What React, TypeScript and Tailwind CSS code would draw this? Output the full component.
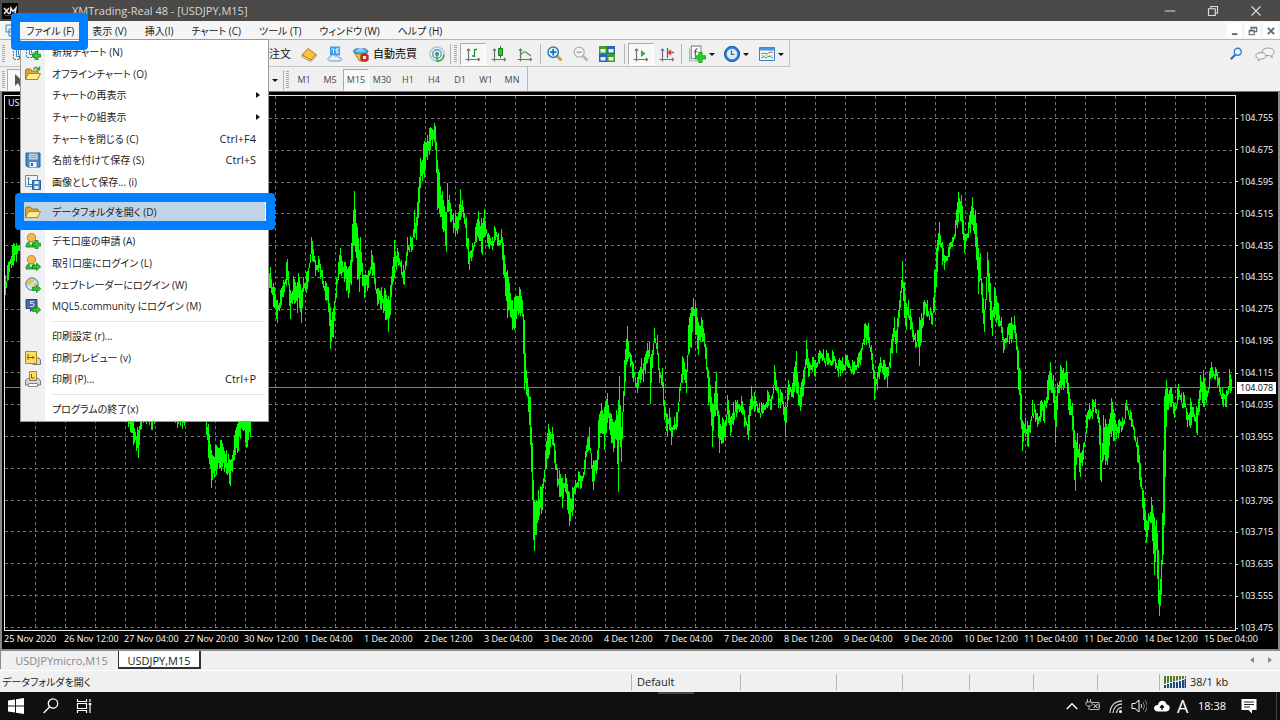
import type { ReactNode } from "react";

type Bar = [number, number, number];

type MenuEntry = {
	label: string;
	shortcut?: string;
	submenu?: boolean;
	selected?: boolean;
	icon?: ReactNode;
};

// x, high, low
const BARS: Bar[] = [
	[5, 275, 295], [8, 262, 280], [12, 245, 265], [16, 243, 262], [20, 232, 250], [60, 300, 330], [120, 380, 410],
	[130, 412, 432], [133, 420, 445], [138, 430, 458], [142, 400, 420], [152, 408, 430], [158, 395, 415], [170, 395, 418],
	[177, 405, 428], [184, 402, 426], [190, 385, 410], [203, 395, 420], [206, 410, 435], [211, 450, 488], [216, 445, 475],
	[220, 440, 468], [226, 450, 474], [230, 460, 486], [234, 435, 460], [238, 415, 451], [242, 395, 430], [246, 405, 448],
	[250, 400, 437], [254, 350, 380], [262, 290, 320],
	[270, 267, 288], [273, 283, 307], [277, 300, 323], [280, 290, 308], [283, 280, 297], [287, 259, 280], [290, 290, 319],
	[293, 276, 300], [297, 282, 313], [298, 273, 298], [301, 290, 323], [303, 277, 292], [306, 272, 293], [308, 268, 282],
	[311, 237, 253], [315, 260, 276], [318, 256, 272], [322, 270, 284], [325, 281, 300], [328, 287, 312], [330, 307, 349],
	[332, 312, 337], [333, 308, 338], [336, 278, 298], [338, 262, 280], [340, 248, 274], [344, 262, 282], [348, 267, 298],
	[351, 243, 285], [352, 224, 262], [354, 191, 245], [357, 227, 280], [359, 250, 292], [360, 237, 275], [364, 275, 298],
	[368, 270, 288], [371, 250, 270], [374, 263, 284], [377, 288, 306], [381, 287, 310], [385, 290, 320], [388, 296, 332],
	[390, 285, 315], [392, 266, 285], [394, 240, 278], [398, 252, 266], [401, 260, 275], [404, 270, 285], [407, 237, 256],
	[412, 237, 250], [414, 210, 238], [416, 217, 240], [418, 187, 218], [420, 158, 188], [424, 141, 178], [427, 135, 160],
	[430, 127, 150], [434, 123, 142], [435, 126, 150], [437, 160, 210], [439, 172, 213], [443, 200, 232], [446, 212, 252],
	[447, 183, 210], [450, 203, 222], [453, 213, 233], [457, 217, 234], [460, 189, 220], [463, 207, 218], [466, 217, 247],
	[469, 252, 270], [472, 243, 257], [475, 227, 243], [478, 211, 238], [482, 223, 255], [484, 209, 237], [488, 233, 247],
	[492, 237, 250], [494, 226, 242], [498, 233, 246], [501, 229, 243], [503, 243, 275], [507, 270, 318], [509, 283, 310],
	[512, 300, 330], [514, 297, 330], [519, 287, 313], [522, 300, 317], [524, 320, 390], [526, 370, 395], [528, 388, 412],
	[530, 397, 445], [532, 443, 500], [533, 480, 540], [534, 500, 551], [536, 500, 535], [538, 490, 520], [542, 484, 510],
	[545, 452, 470], [548, 424, 458], [552, 427, 445], [555, 450, 470], [557, 468, 487], [562, 478, 508], [565, 474, 492],
	[569, 492, 526], [573, 488, 510], [575, 480, 494], [578, 471, 488], [581, 476, 488], [584, 460, 475], [587, 438, 452],
	[589, 427, 450], [592, 465, 482], [593, 460, 490], [597, 450, 470], [598, 420, 460], [601, 403, 433], [604, 407, 450],
	[607, 393, 423], [610, 413, 435], [613, 422, 452], [616, 410, 440], [618, 400, 492], [619, 376, 440], [621, 427, 462],
	[624, 360, 396], [627, 326, 362], [630, 353, 367], [633, 363, 382], [637, 377, 393], [641, 358, 380], [643, 363, 382],
	[647, 343, 363], [649, 342, 357], [650, 357, 404], [652, 350, 368], [654, 328, 342], [657, 335, 355], [659, 368, 383],
	[662, 368, 388], [664, 400, 420], [667, 414, 436], [669, 408, 430], [671, 427, 445], [674, 417, 430], [677, 412, 427],
	[679, 387, 402], [682, 356, 383], [684, 362, 380], [686, 370, 393], [688, 325, 353], [691, 307, 348], [693, 298, 316],
	[695, 303, 335], [698, 322, 355], [701, 317, 337], [704, 333, 347], [706, 347, 370], [708, 370, 405], [710, 385, 412],
	[712, 403, 447], [714, 393, 417], [716, 372, 410], [718, 410, 438], [719, 415, 453], [722, 417, 443], [725, 420, 440],
	[727, 395, 413], [730, 417, 436], [733, 402, 425], [737, 400, 413], [741, 396, 413], [744, 410, 427], [748, 415, 440],
	[751, 386, 410], [755, 397, 410], [759, 403, 413], [763, 403, 413], [767, 390, 408], [771, 396, 410], [774, 365, 382],
	[778, 388, 408], [782, 393, 404], [785, 405, 437], [788, 380, 400], [792, 383, 397], [796, 351, 393], [798, 382, 405],
	[800, 387, 411], [803, 370, 396], [806, 340, 365], [808, 358, 377], [812, 357, 372], [815, 360, 377], [818, 353, 363],
	[823, 349, 360], [828, 353, 365], [833, 352, 363], [838, 360, 377], [842, 357, 373], [847, 355, 367], [852, 360, 373],
	[854, 361, 374], [857, 357, 367], [860, 350, 365], [864, 324, 345], [868, 323, 343], [871, 345, 360], [874, 370, 400],
	[877, 372, 390], [880, 357, 372], [883, 360, 375], [887, 367, 388], [890, 348, 368], [894, 317, 337], [896, 330, 353],
	[899, 300, 318], [902, 261, 288], [904, 282, 318], [906, 303, 330], [908, 300, 318], [912, 322, 337], [915, 333, 348],
	[918, 330, 347], [919, 317, 366], [921, 313, 343], [924, 300, 315], [927, 300, 317], [932, 313, 325], [934, 270, 312],
	[937, 240, 272], [939, 222, 245], [942, 242, 265], [944, 255, 270], [948, 247, 257], [952, 237, 247], [955, 220, 237],
	[958, 192, 222], [961, 195, 222], [964, 233, 253], [968, 222, 238], [972, 197, 225], [975, 210, 247], [978, 248, 294],
	[980, 253, 280], [982, 283, 313], [984, 310, 332], [986, 277, 300], [987, 252, 275], [990, 283, 320], [992, 310, 336],
	[994, 287, 318], [998, 303, 326], [1001, 317, 333], [1003, 337, 353], [1007, 327, 342], [1011, 317, 343],
	[1014, 316, 333], [1016, 333, 350], [1018, 350, 390], [1020, 370, 420], [1022, 420, 451], [1025, 418, 437],
	[1028, 425, 447], [1030, 420, 433], [1032, 400, 413], [1037, 413, 427], [1041, 400, 417], [1044, 400, 423],
	[1047, 380, 403], [1050, 362, 390], [1053, 375, 403], [1055, 400, 443], [1057, 383, 410], [1060, 365, 388],
	[1063, 368, 390], [1066, 361, 383], [1068, 383, 410], [1072, 403, 430], [1074, 430, 480], [1075, 440, 491],
	[1077, 433, 457], [1080, 453, 477], [1083, 443, 460], [1086, 415, 430], [1089, 403, 420], [1095, 399, 413],
	[1098, 410, 423], [1100, 425, 480], [1101, 460, 482], [1103, 415, 460], [1107, 427, 465], [1111, 398, 437],
	[1114, 413, 441], [1118, 420, 438], [1122, 417, 430], [1126, 400, 410], [1130, 410, 420], [1134, 427, 440],
	[1137, 437, 462], [1140, 463, 487], [1143, 490, 520], [1146, 520, 543], [1148, 513, 530], [1151, 497, 523],
	[1154, 517, 575], [1156, 520, 550], [1158, 550, 604], [1159, 590, 616], [1161, 560, 595], [1163, 450, 555],
	[1164, 396, 525], [1166, 380, 427], [1169, 390, 403], [1171, 387, 407], [1174, 403, 418], [1178, 384, 400],
	[1181, 393, 403], [1184, 395, 407], [1187, 412, 427], [1190, 398, 428], [1193, 407, 417], [1197, 408, 435],
	[1200, 375, 400], [1203, 370, 407], [1206, 390, 403], [1211, 362, 377], [1215, 367, 380], [1219, 377, 392],
	[1223, 393, 407], [1226, 390, 407], [1229, 369, 390], [1232, 380, 397],
];

const PRICES = [
	"104.755", "104.675", "104.595", "104.515", "104.435", "104.355", "104.275", "104.195", "104.115",
	"104.035", "103.955", "103.875", "103.795", "103.715", "103.635", "103.555", "103.475",
];

const TIMES = [
	"25 Nov 2020", "26 Nov 12:00", "27 Nov 04:00", "27 Nov 20:00", "30 Nov 12:00", "1 Dec 04:00", "1 Dec 20:00",
	"2 Dec 12:00", "3 Dec 04:00", "3 Dec 20:00", "4 Dec 12:00", "7 Dec 04:00", "7 Dec 20:00", "8 Dec 12:00",
	"9 Dec 04:00", "9 Dec 20:00", "10 Dec 12:00", "11 Dec 04:00", "11 Dec 20:00", "14 Dec 12:00", "15 Dec 04:00",
];

const TIMEFRAMES = ["M1", "M5", "M15", "M30", "H1", "H4", "D1", "W1", "MN"];

function trazarBarras(): string {
	let d = "";
	let altoPrevio = 275;
	let bajoPrevio = 295;
	for (let i = 0; i < BARS.length - 1; i++) {
		const [x0, h0, l0] = BARS[i];
		const [x1, h1, l1] = BARS[i + 1];
		for (let x = x0; x < x1; x++) {
			const t = (x - x0) / (x1 - x0);
			const ruido = t === 0 ? 0 : ((x * 7919) % 13) - 2;
			const ruido2 = t === 0 ? 0 : ((x * 6271) % 13) - 2;
			let alto = Math.round(h0 + (h1 - h0) * t + ruido);
			let bajo = Math.max(alto + 5, Math.round(l0 + (l1 - l0) * t - ruido2));
			// each bar touches the one before it
			alto = Math.min(alto, bajoPrevio);
			bajo = Math.max(bajo, altoPrevio);
			d += `M${x + 0.5} ${alto}V${bajo}`;
			altoPrevio = alto;
			bajoPrevio = bajo;
		}
	}
	return d;
}

const TRAZO = trazarBarras();

function Icon({ children, className = "h-4 w-4" }: { children: ReactNode; className?: string }) {
	return (
		<svg viewBox="0 0 16 16" className={`${className} shrink-0`} fill="none" aria-hidden="true">
			{children}
		</svg>
	);
}

const flecha = <path d="M7.5 10.2h4V8l4.2 3.8-4.2 3.8v-2.2h-4z" fill="#2fc52f" stroke="#13801a" strokeWidth=".8" />;
const mas = <path d="M10.2 7.5h2.8v2.8h2.8V13H13v2.8h-2.8V13H7.5v-2.7h2.7z" fill="#2ecc35" stroke="#13801a" strokeWidth=".8" />;
const persona = (
	<>
		<path d="M1 14c0-4 2-5.500 5-5.500s5 1.500 5 5.500z" fill="#38b93a" stroke="#178022" strokeWidth=".8" />
		<circle cx="6.500" cy="4.700" r="4.200" fill="#f2bc4d" stroke="#a96f12" strokeWidth=".8" />
		<path d="M4.500 9.500 6 12l2-2.500" fill="#fff" />
	</>
);
const ejes = <path d="M3.500 15.500V3M2 4.500 3.500 3 5 4.500M.5 13.500h14M13 12l1.500 1.500L13 15" stroke="#707070" strokeWidth="1.200" />;

function NewChartIcon() {
	return (
		<Icon>
			<path d="M4.500 2.500h8v8h-8z" stroke="#3d82b8" fill="#fff" />
			<path d="M1.500 5v8.500H10" stroke="#3d82b8" strokeDasharray="2 1" />
			<path d="M6.500 4v5h5" stroke="#3d82b8" />
			{mas}
		</Icon>
	);
}

function FolderIcon({ arrow = false }: { arrow?: boolean }) {
	return (
		<Icon>
			<path d="M.5 13V4l1-1h4L7 5h6v8z" fill="#d9a437" stroke="#a8761b" />
			<path d="m.5 13.500 3-6h12l-2.800 6z" fill="#ffec91" stroke="#b48322" />
			{arrow && <path d="M8.500 3.500c1-2.500 3.500-2.500 5-.5M14.500.5v3.200h-3" stroke="#26a32c" strokeWidth="1.400" />}
		</Icon>
	);
}

function SaveIcon() {
	return (
		<Icon>
			<path d="M1 1h14v14H2.500L1 13.500z" fill="#4c8ac4" stroke="#265d92" />
			<path d="M4 1.500h8.500v6H4z" fill="#b9d5ea" />
			<path d="M5 3.500h6M5 5.500h6" stroke="#7fa9cc" />
			<path d="M4.500 10h7v5h-7z" fill="#f2f6fa" />
			<path d="M6 11h2v3H6z" fill="#2d659c" />
		</Icon>
	);
}

function SaveImageIcon() {
	return (
		<Icon>
			<path d="M.5 1.500h12v11H.5z" fill="#eef6fc" stroke="#5b8eb8" />
			<path d="M3.500 3.500v7h4M2.500 4.500h2M2.500 10.500h2" stroke="#41759f" />
			<path d="M7.500 6.500h8v9h-8z" fill="#4c8ac4" stroke="#265d92" />
			<path d="M9.500 7h4v3h-4zM9.500 12h4v3h-4z" fill="#e4f0fa" />
		</Icon>
	);
}

function GlobeIcon() {
	return (
		<Icon>
			<circle cx="7" cy="7" r="6.200" fill="#bfe1f8" stroke="#2f76b5" />
			<path d="M3 3c2-2 5-2 7 0L8 5 6 7 3 8 1.500 6zM9 7l3-1 1 2-2 3-2-1z" fill="#e8c547" />
			<path d="M3 9.500 6 12" stroke="#fff" />
			{flecha}
		</Icon>
	);
}

function CommunityIcon() {
	return (
		<Icon>
			<path d="M1 1.500h11v9H8l-2.500 3v-3H1z" fill="#486ba5" stroke="#2b467a" />
			<path d="M9 3.500H5.500v2H8q1 .2 1 1.500T8 8.500H5" stroke="#cfe0f5" />
			{flecha}
		</Icon>
	);
}

function PreviewIcon() {
	return (
		<Icon>
			<path d="M8 8h6l1.500 2v4.500H8z" fill="#d7d7d7" stroke="#777" />
			<path d="M.5 1.500h11v12H.5z" fill="#fbdc62" stroke="#b58816" />
			<path d="M3 4v6M2 7.500h7.500M8 6v3" stroke="#776124" />
		</Icon>
	);
}

function PrintIcon() {
	return (
		<Icon>
			<path d="M4.500.5h7v9h-7z" fill="#fbdc62" stroke="#b58816" />
			<path d="M6.500 3v4h3" stroke="#776124" />
			<path d="M2.500 7.500h2v2h7v-2h2l2 2.500v4H.5v-4z" fill="#d9d9d9" stroke="#777" />
			<path d="M3.500 12.500h9v3h-9z" fill="#fff" stroke="#888" />
		</Icon>
	);
}

const MENU: MenuEntry[][] = [
	[
		{ label: "新規チャート (N)", icon: <NewChartIcon /> },
		{ label: "オフラインチャート (O)", icon: <FolderIcon arrow /> },
		{ label: "チャートの再表示", submenu: true },
		{ label: "チャートの組表示", submenu: true },
		{ label: "チャートを閉じる (C)", shortcut: "Ctrl+F4" },
		{ label: "名前を付けて保存 (S)", shortcut: "Ctrl+S", icon: <SaveIcon /> },
		{ label: "画像として保存... (i)", icon: <SaveImageIcon /> },
	],
	[{ label: "データフォルダを開く (D)", selected: true, icon: <FolderIcon /> }],
	[
		{ label: "デモ口座の申請 (A)", icon: <Icon>{persona}{mas}</Icon> },
		{ label: "取引口座にログイン (L)", icon: <Icon>{persona}{flecha}</Icon> },
		{ label: "ウェブトレーダーにログイン (W)", icon: <GlobeIcon /> },
		{ label: "MQL5.community にログイン (M)", icon: <CommunityIcon /> },
	],
	[
		{ label: "印刷設定 (r)..." },
		{ label: "印刷プレビュー (v)", icon: <PreviewIcon /> },
		{ label: "印刷 (P)...", shortcut: "Ctrl+P", icon: <PrintIcon /> },
	],
	[{ label: "プログラムの終了(x)" }],
];

function FileMenu() {
	return (
		<div
			role="menu"
			className="absolute left-5 top-[39px] z-10 flex h-[383px] w-[249px] flex-col border border-[#9a9a9a] bg-[linear-gradient(to_right,#f0f0f0_24px,#ffffff_24px)] py-px"
		>
			{MENU.map((grupo, i) => (
				<div key={i} className="contents">
					{i > 0 && (
						<div className="flex h-2 shrink-0 items-center pl-[31px] pr-[3px]">
							<div className="h-px w-full bg-[#e4e4e4]" />
						</div>
					)}
					{grupo.map((item) => (
						<button
							key={item.label}
							type="button"
							role="menuitem"
							className={`mx-[3px] flex min-h-0 flex-1 items-center pr-[9px] text-left ${item.selected ? "bg-[#c0d4e8]" : ""}`}
						>
							<span className="w-7 shrink-0 pl-px">{item.icon}</span>
							<span className="flex-1 whitespace-nowrap text-[10px]">{item.label}</span>
							{item.shortcut && <span>{item.shortcut}</span>}
							{item.submenu && (
								<svg viewBox="0 0 4 6" className="-mr-1 h-[6px] w-1" aria-hidden="true">
									<path d="M0 0 4 3 0 6z" fill="#111" />
								</svg>
							)}
						</button>
					))}
				</div>
			))}
		</div>
	);
}

function Grip() {
	return <div className="mx-0.5 h-[18px] w-[3px] shrink-0 bg-[repeating-linear-gradient(to_bottom,#aaa_0_1px,#f0f0f0_1px_2px)]" />;
}

function Divider() {
	return <div className="h-5 w-px shrink-0 bg-[#b5b5b5]" />;
}

function Caret() {
	return (
		<svg viewBox="0 0 6 3" className="h-[3px] w-[6px] shrink-0" aria-hidden="true">
			<path d="M0 0h6L3 3z" fill="#111" />
		</svg>
	);
}

function Tool({ label, pressed = false, menu = false, children }: { label: string; pressed?: boolean; menu?: boolean; children: ReactNode }) {
	return (
		<button
			type="button"
			aria-label={label}
			className={`flex h-[22px] shrink-0 items-center justify-center ${menu ? "w-[35px] gap-[3px]" : "w-[26px]"} ${
				pressed ? "border border-b-white border-l-[#aaa] border-r-white border-t-[#aaa] bg-[#f8f8f8]" : ""
			}`}
		>
			{children}
			{menu && <Caret />}
		</button>
	);
}

function Toolbars() {
	return (
		<div className="relative h-[52px] shrink-0 border-b border-[#777] bg-[#f0f0f0]">
			<div className="flex h-[27px] w-max items-center border-b border-r border-[#c4c4c4] pt-0.5">
				<Grip />
				<Tool label="新規チャート">
					<NewChartIcon />
				</Tool>
				<div className="w-[200px]" />
				<button type="button" className="h-[22px] w-[58px] whitespace-nowrap text-right">
					新規注文
				</button>
				<div className="w-[5px]" />
				<Tool label="MetaEditor">
					<Icon>
						<path d="m1 9 6-6.500 8 6-5 5.500z" fill="#f5c542" stroke="#a8761b" />
						<path d="m1 9 9 5 5-5.500v2L10 15.500 1 11z" fill="#fff2c9" stroke="#a8761b" strokeWidth=".8" />
					</Icon>
				</Tool>
				<Tool label="仮想ホスティング">
					<Icon>
						<path d="M3 .5h10v9H3z" fill="#3ca0f0" />
						<path d="M4.500 3h2v4M12 3H9v2h2v2H9" stroke="#fff" />
						<path d="M3.500 15C0 15 .3 10.800 3.300 11c.8-2.700 4.200-2.800 5.200-.7 1.500-1 3.500 0 3.300 1.500 4-.3 3.700 3.200 1 3.200z" fill="#e3edf8" stroke="#7894bb" />
					</Icon>
				</Tool>
				<button type="button" className="flex h-[22px] shrink-0 items-center gap-1 whitespace-nowrap pl-[5px] pr-[7px] text-black">
					<Icon>
						<path d="M1.500 7h12l-4 8h-3z" fill="#edc24a" stroke="#a8761b" />
						<path d="M.5 6c0-3 3-3.500 7-3.500S15 3 15 6c-3 2.500-11.500 2.500-14.500 0z" fill="#5fb2e5" stroke="#2877a8" />
						<path d="M4 5.500c0-5 7-5 7 0" fill="#8bd0f5" />
						<path d="M9.300 7.500h4.400l2 2v4.200l-2 2H9.300l-2-2V9.500z" fill="#c8281e" />
						<path d="M10 10h3v3h-3z" fill="#fff" />
					</Icon>
					自動売買
				</button>
				<Tool label="シグナル">
					<Icon>
						<circle cx="8" cy="8" r="7" stroke="#b4c6d2" strokeWidth="1.500" />
						<circle cx="8" cy="8" r="4.300" stroke="#62a3c7" strokeWidth="1.500" />
						<circle cx="8" cy="8" r="2" fill="#2f83b8" />
						<path d="M8 8v7.500c4-.5 7-3 7-7" stroke="#45a94c" strokeWidth="1.500" />
					</Icon>
				</Tool>
				<Divider />
				<div className="w-px" />
				<Grip />
				<div className="w-px" />
				<Tool label="バーチャート" pressed>
					<Icon>
						{ejes}
						<path d="M9.500 3v8M9.500 3.500H12M7 10h2.500" stroke="#159a2b" strokeWidth="1.300" />
					</Icon>
				</Tool>
				<Tool label="ローソク足">
					<Icon>
						{ejes}
						<path d="M9.500 0v12" stroke="#13801a" />
						<path d="M7.500 2.500h4v7h-4z" fill="#2fc52f" stroke="#13801a" />
					</Icon>
				</Tool>
				<Tool label="ラインチャート">
					<Icon>
						{ejes}
						<path d="M3 10c4-7 6-4 11 0" stroke="#43a94c" strokeWidth="1.300" />
					</Icon>
				</Tool>
				<div className="w-0.5" />
				<Divider />
				<div className="w-px" />
				<Tool label="ズームイン">
					<Icon>
						<path d="m9.500 9.500 5 5" stroke="#d8a32c" strokeWidth="3" />
						<circle cx="6.200" cy="6.200" r="5.200" fill="#dff1fd" stroke="#2f7fba" strokeWidth="1.500" />
						<path d="M3 6.200h6.400M6.200 3v6.400" stroke="#1f6fad" strokeWidth="1.700" />
					</Icon>
				</Tool>
				<Tool label="ズームアウト">
					<Icon>
						<path d="m9.500 9.500 5 5" stroke="#b5b5b5" strokeWidth="2.500" />
						<circle cx="6.200" cy="6.200" r="5" fill="#f4f4f4" stroke="#b0b0b0" strokeWidth="1.300" />
						<path d="M3.500 6.200h5.400" stroke="#aaa" strokeWidth="1.500" />
					</Icon>
				</Tool>
				<Tool label="ウィンドウの整列">
					<Icon>
						<path d="M0 0h8v8H0zM8 8h8v8H8z" fill="#3f9c2f" />
						<path d="M8 0h8v8H8zM0 8h8v8H0z" fill="#2466b8" />
						<path d="M1.500 3h5v3.500h-5zM9.500 3h5v3.500h-5zM1.500 11h5v3.500h-5zM9.500 11h5v3.500h-5z" fill="#e8f4e0" />
					</Icon>
				</Tool>
				<div className="w-1" />
				<Divider />
				<div className="w-[3px]" />
				<Tool label="自動スクロール" pressed>
					<Icon>
						{ejes}
						<path d="m8 4 4.500 3.500L8 11z" fill="#27b23a" />
					</Icon>
				</Tool>
				<Tool label="チャートシフト">
					<Icon>
						{ejes}
						<path d="M8.500 2v10" stroke="#2c6fad" strokeWidth="1.300" />
						<path d="M15 6.500h-5M12 4 9.500 6.500 12 9" stroke="#c84028" strokeWidth="1.300" />
					</Icon>
				</Tool>
				<div className="w-px" />
				<Divider />
				<div className="w-0.5" />
				<Tool label="インディケータ" menu>
					<Icon className="h-[18px] w-[18px]">
						<path d="M3 1h8.500v11H3z" fill="#fff" stroke="#888" />
						<path d="M1.500 3v11H9" stroke="#aaa" />
						<path d="M8.500 3.500C6 3 6.500 6 6.500 9.500M5 6h3.500" stroke="#555" />
						<path d="M9.500 6.500h3v3h3v3h-3v3h-3v-3h-3v-3h3z" fill="#25d12c" stroke="#159a1b" strokeWidth=".7" />
					</Icon>
				</Tool>
				<Tool label="期間設定" menu>
					<Icon>
						<circle cx="8" cy="8" r="6.600" fill="#d9ecfb" stroke="#2f7fd6" strokeWidth="2.600" />
						<circle cx="8" cy="8" r="7.600" stroke="#1b4f94" strokeWidth=".8" />
						<path d="M7.500 4.500v4h3" stroke="#4e5b66" strokeWidth="1.200" />
					</Icon>
				</Tool>
				<Tool label="テンプレート" menu>
					<Icon>
						<path d="M.5 1.500h15v13H.5z" fill="#f7fbff" stroke="#3a7fc4" />
						<path d="M.5 1.500h15v3H.5z" fill="#4a94dc" />
						<path d="m2 8 3-1 3 1 3-2 3 .5" stroke="#b9643f" />
						<path d="m2 12 3-1.500 2 1.500 3-2 4 2" stroke="#37a045" />
						<path d="M2 9.500h12" stroke="#c9d9e8" />
					</Icon>
				</Tool>
			</div>
			<div className="flex h-6 w-max items-center border-r border-[#b5b5b5] pt-0.5 text-[9px] text-[#484848]">
				<Grip />
				<Tool label="カーソル" pressed>
					<Icon>
						<path d="M3 2v12l3-3 2 4 2-1-2-3.500h4z" fill="#555" />
					</Icon>
				</Tool>
				<div className="w-[239px]" />
				<Caret />
				<div className="w-[5px]" />
				<Divider />
				<Grip />
				{TIMEFRAMES.map((tf) => (
					<button
						key={tf}
						type="button"
						className={`h-[22px] w-[26px] text-center ${
							tf === "M15" ? "border border-b-white border-l-[#aaa] border-r-white border-t-[#aaa] bg-[#f8f8f8]" : ""
						}`}
					>
						{tf}
					</button>
				))}
				<div className="w-0.5" />
			</div>
			<div className="absolute right-[5px] top-[6px] flex items-center gap-3">
				<button type="button" aria-label="検索">
					<Icon className="h-[14px] w-[14px]">
						<path d="m7 9-5 5" stroke="#2f72c4" strokeWidth="2.500" />
						<circle cx="10" cy="5.500" r="4" fill="#e8f5ff" stroke="#3180d0" strokeWidth="1.600" />
					</Icon>
				</button>
				<button type="button" aria-label="チャット">
					<svg viewBox="0 0 22 16" className="h-4 w-5" fill="#f5f5f5" stroke="#8c8c8c" aria-hidden="true">
						<path d="M14 1.500c4 0 7 1.500 7 4.200 0 2-1 3-2.500 3.500L19 12l-3-2.300C11 10 8 8.500 8 5.700 8 3 10.500 1.500 14 1.500z" />
						<path d="M6.500 6.500c3.500 0 5.500 1.300 5.500 3.500 0 2.400-2.500 3.500-6 3.500L4 15.500l-.3-2.500C2 12.500 1 11.500 1 10c0-2.200 2-3.500 5.500-3.500z" />
					</svg>
				</button>
			</div>
		</div>
	);
}

function Chart() {
	return (
		<div className="flex min-h-0 flex-1 border-x-2 border-b-2 border-[#8a8a8a] bg-black pl-[2px] pt-[3px] text-[9px] leading-[10px] text-white">
			<div className="flex min-w-0 flex-1 flex-col">
				<div className="relative min-h-0 flex-1 border border-[#e8e8e8]">
					<svg
						viewBox="5 96 1230 534"
						preserveAspectRatio="none"
						className="absolute inset-0 h-full w-full"
						fill="none"
						shapeRendering="crispEdges"
						aria-hidden="true"
					>
						{Array.from({ length: 40 }, (_, i) => (
							<path key={i} d={`M${35.5 + i * 30} 96V630`} stroke="#697583" strokeDasharray="3 3" />
						))}
						{PRICES.map((p, i) => (
							<path key={p} d={`M5 ${Math.round(118 + i * 31.8) + 0.5}H1235`} stroke="#697583" strokeDasharray="3 3" />
						))}
						<path d="M5 387.500H1235" stroke="#76828f" />
						<path d={TRAZO} stroke="#00ff00" />
					</svg>
					<span className="absolute left-[3px] top-[2px]">USDJPY,M15</span>
				</div>
				<div className="grid h-[18px] grid-cols-[repeat(20,minmax(0,60fr))_minmax(0,30fr)] pr-0.5 pt-[3px]">
					{TIMES.map((t) => (
						<span key={t} className="whitespace-nowrap">
							{t}
						</span>
					))}
				</div>
			</div>
			<div className="relative flex w-[42px] shrink-0 flex-col justify-between pb-4 pt-[18px]">
				{PRICES.map((p) => (
					<span key={p} className="flex items-center gap-0.5">
						<i className="h-px w-0.5 bg-[#e8e8e8]" />
						{p}
					</span>
				))}
				<span className="absolute left-px top-[287px] bg-white px-[3px] py-px text-black">104.078</span>
			</div>
		</div>
	);
}

function Taskbar() {
	return (
		<div className="flex h-7 shrink-0 items-center bg-[#101010] text-white">
			<button type="button" aria-label="スタート" className="ml-2">
				<Icon>
					<path d="m0 2.500 7-1v6H0zM8 1.300 16 0v7.500H8zM0 8.500h7v6l-7-1zM8 8.500h8V16l-8-1.200z" fill="#fff" />
				</Icon>
			</button>
			<button type="button" aria-label="検索" className="ml-[19px]">
				<Icon>
					<circle cx="10" cy="5.500" r="4.700" stroke="#fff" strokeWidth="1.300" />
					<path d="M6.500 9 .7 15" stroke="#fff" strokeWidth="1.300" />
				</Icon>
			</button>
			<button type="button" aria-label="タスクビュー" className="ml-[17px]">
				<Icon>
					<path d="M1.500 5.500h9v5h-9zM1.500 1v2.500h9V1M1.500 15v-2.500h9V15M14 1v3M14 8v7" stroke="#fff" strokeWidth="1.200" />
					<path d="M12.800 5h2.500v2.500h-2.500z" fill="#fff" />
				</Icon>
			</button>
			<div className="flex-1 self-start">
				<div className="ml-[566px] h-0.5 w-9 bg-[#454545]" />
			</div>
			<div className="flex items-center gap-[7px] pr-[9px]">
				<Icon className="h-3 w-3">
					<path d="m1 12 7-7 7 7" stroke="#fff" strokeWidth="1.800" />
				</Icon>
				<Icon>
					<path d="M7 4.500h7v7H5M14.500 6.500v3M2.500 1v3M5.500 1v3M1 4h6v2.500L5.500 8H2.500L1 6.500zM4 8v4" stroke="#bbb" />
					<path d="m8.500 6 4 4M12.500 6l-4 4" stroke="#fff" />
				</Icon>
				<Icon>
					<path d="M2 15C2 8 7 3 14 3M5 15c0-5 4-9 9-9M8.500 15c0-3 2.500-5.500 5.500-5.500" stroke="#ccc" strokeWidth="1.300" />
					<circle cx="12.500" cy="13.500" r="1.500" fill="#fff" />
				</Icon>
				<Icon>
					<path d="M1 5.500h3l4-3.500v12l-4-3.500H1z" stroke="#fff" />
					<path d="M10 6q1.500 2 0 4" stroke="#ddd" />
					<path d="M12 4q3 4 0 8M14 2q4.500 6 0 12" stroke="#888" />
				</Icon>
				<Icon>
					<path d="M4 13.500c-5 0-5.500-6.500 0-6.500.5-5.500 8-5.500 8.500-.5 4.500 0 4 7 0 7z" fill="#fff" />
					<path d="M8 12V7.500M6 9.500l2-2 2 2" stroke="#101010" strokeWidth="1.400" />
				</Icon>
				<span className="w-3 text-[18px] leading-5">A</span>
			</div>
			<span className="mr-[15px] text-[11px]">18:38</span>
			<button type="button" aria-label="通知" className="mr-[19px]">
				<Icon>
					<path d="M.5 1h15v11H11v3.500L7.500 12h-7z" fill="#fff" />
					<path d="M3 4h10M3 6.500h10M3 9h6" stroke="#222" />
				</Icon>
			</button>
			<div className="h-full w-px bg-[#444]" />
			<div className="w-[3px]" />
		</div>
	);
}

export default function App() {
	return (
		<div className="relative flex h-screen min-h-[720px] flex-col overflow-hidden bg-[#f0f0f0] font-['Open_Sans','Noto_Sans_CJK_JP',sans-serif] text-[11px] leading-4 text-[#222] [font-feature-settings:'palt']">
			<header className="flex h-[21px] shrink-0 items-center bg-[#4b4a48] text-[#d8d8d8]">
				<svg viewBox="0 0 16 16" className="ml-0.5 h-4 w-4" aria-hidden="true">
					<path d="M0 0h16v16H0z" fill="#050505" />
					<path d="m2 5 5 6M7 5l-5 6M8 11l1-6 2 3.500L14 5l-1 6" stroke="#e8e8e8" strokeWidth="1.500" fill="none" />
					<path d="M3 12.500h10" stroke="#a22" />
				</svg>
				<h1 className="ml-[54px] flex-1">XMTrading-Real 48 - [USDJPY,M15]</h1>
				<div className="flex gap-[31px] pr-[18px]">
					<button type="button" aria-label="最小化">
						<Icon className="h-3 w-3">
							<path d="M1 8h14" stroke="#ddd" strokeWidth="1.300" />
						</Icon>
					</button>
					<button type="button" aria-label="元に戻す">
						<Icon className="h-3 w-3">
							<path d="M2 5h9v9H2zM5 5V2h9v9h-3" stroke="#ddd" strokeWidth="1.500" />
						</Icon>
					</button>
					<button type="button" aria-label="閉じる">
						<Icon className="h-3 w-3">
							<path d="m2 2 12 12M14 2 2 14" stroke="#ddd" strokeWidth="1.500" />
						</Icon>
					</button>
				</div>
			</header>
			<nav className="flex h-[19px] shrink-0 items-center gap-[18px] border-b border-[#b4b4b4] bg-[#f5f5f5] pl-[5px] pr-0.5 pt-px text-[10px]">
				<Icon className="-mr-[13px] h-4 w-4">
					<path d="M1 2h8v7H1zM4 6h8v7H4z" fill="#e8f4fc" stroke="#3d82b8" />
				</Icon>
				{["ファイル (F)", "表示 (V)", "挿入(I)", "チャート (C)", "ツール (T)", "ウィンドウ (W)", "ヘルプ (H)"].map((m) => (
					<button key={m} type="button" className="whitespace-nowrap">
						{m}
					</button>
				))}
				<div className="ml-auto flex gap-[3px]">
					<button type="button" aria-label="ウィンドウを最小化" className="flex h-[15px] w-[15px] items-center justify-center bg-white">
						<Icon className="h-[10px] w-[10px]">
							<path d="M3 13h9" stroke="#546b7c" strokeWidth="3" />
						</Icon>
					</button>
					<button type="button" aria-label="ウィンドウを元に戻す" className="flex h-[15px] w-[15px] items-center justify-center bg-white">
						<Icon className="h-[10px] w-[10px]">
							<path d="M2 7h8v7H2zM5 6V2h9v7h-3M5 3h9M2 8h8" stroke="#546b7c" strokeWidth="1.800" />
						</Icon>
					</button>
					<button type="button" aria-label="ウィンドウを閉じる" className="flex h-[15px] w-[15px] items-center justify-center bg-white">
						<Icon className="h-[10px] w-[10px]">
							<path d="m3 3 10 10M13 3 3 13" stroke="#546b7c" strokeWidth="3" />
						</Icon>
					</button>
				</div>
			</nav>
			<Toolbars />
			<Chart />
			<div className="flex h-[20px] shrink-0 items-start border-b border-white pr-2">
				<button type="button" className="h-[18px] w-[118px] border-l border-[#888] pl-1 pt-0.5 text-center text-[#8a8a8a]">
					USDJPYmicro,M15
				</button>
				<button type="button" className="h-[18px] w-[83px] border border-t-0 border-b-2 border-r-2 border-[#333] bg-white pt-0.5">
					USDJPY,M15
				</button>
				<div className="ml-auto flex gap-[14px] pt-1.5">
					<svg viewBox="0 0 4 6" className="h-[6px] w-1" aria-hidden="true">
						<path d="M4 0v6L0 3z" fill="#888" />
					</svg>
					<svg viewBox="0 0 4 6" className="h-[6px] w-1" aria-hidden="true">
						<path d="M0 0v6l4-3z" fill="#888" />
					</svg>
				</div>
			</div>
			<footer className="flex h-[21px] shrink-0 items-center">
				<span className="min-w-0 flex-1 pl-0.5 text-[10px]">データフォルダを開く</span>
				<span className="w-[109px] border-l border-[#b5b5b5] pl-[5px]">Default</span>
				<span className="h-4 w-24 border-l border-[#b5b5b5]" />
				<span className="h-4 w-[66px] border-l border-[#b5b5b5]" />
				<span className="h-4 w-[67px] border-l border-[#b5b5b5]" />
				<span className="h-4 w-16 border-l border-[#b5b5b5]" />
				<span className="h-4 w-16 border-l border-[#b5b5b5]" />
				<span className="h-4 w-[62px] border-l border-[#b5b5b5]" />
				<span className="flex w-[121px] items-center gap-1 border-l border-[#b5b5b5] pl-1">
					<svg viewBox="0 0 22 12" className="h-3 w-[22px]" fill="none" aria-hidden="true">
						<path d="M0 5h22" stroke="#4f7a2c" strokeWidth="10" strokeDasharray="2 1" />
						<path d="M0 12V8l22-6v10z" fill="#f0f0f0" />
						<path d="M1 12V9M4 12V8M7 12V7M10 12V6M13 12V6M16 12V5M19 12V4M21.500 12V3" stroke="#1c4a7c" strokeWidth="2" />
					</svg>
					38/1 kb
				</span>
			</footer>
			<Taskbar />
			<FileMenu />
			<div className="pointer-events-none absolute left-[11px] top-[13px] z-20 h-[37px] w-[77px] rounded border-[9px] border-[#0080ff]" />
			<div className="pointer-events-none absolute left-[15px] top-[193px] z-20 h-[37px] w-[260px] rounded border-[9px] border-[#0080ff]" />
		</div>
	);
}
